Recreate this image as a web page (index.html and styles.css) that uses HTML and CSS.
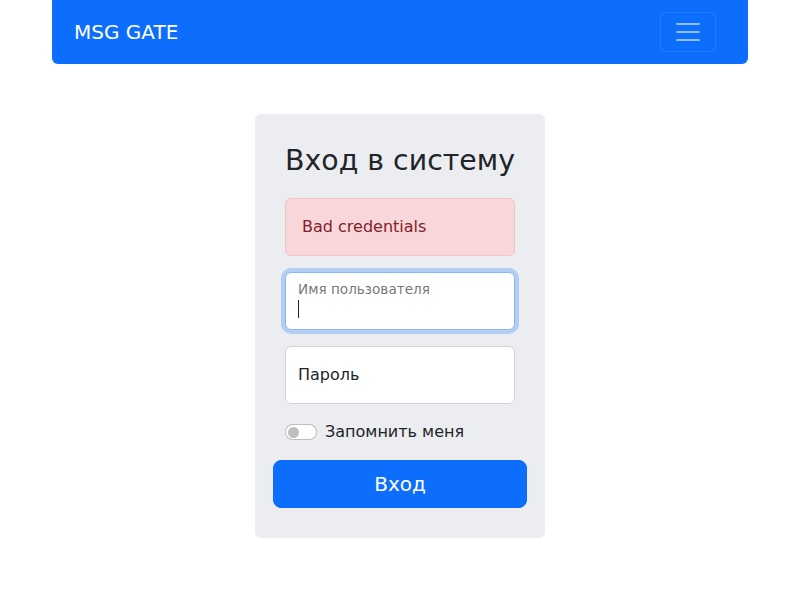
FILE: index.html
```html
<!DOCTYPE html>
<html lang="ru">
<head>
<meta charset="utf-8">
<title>MSG GATE</title>
<link rel="stylesheet" href="styles.css">
</head>
<body>
<div class="container">
  <nav class="navbar">
    <a class="brand" href="#">MSG GATE</a>
    <button class="toggler" type="button" aria-label="Меню">
      <svg width="30" height="30" viewBox="0 0 30 30"><path d="M4 7h22M4 15h22M4 23h22" stroke="rgba(255,255,255,0.55)" stroke-width="2" stroke-linecap="round"/></svg>
    </button>
  </nav>
</div>
<main class="main">
  <form class="card">
    <h1 class="title">Вход в систему</h1>
    <div class="alert">Bad credentials</div>
    <div class="field focused">
      <input class="input" type="text" id="username">
      <label class="label floated" for="username">Имя пользователя</label>
      <span class="caret"></span>
    </div>
    <div class="field">
      <input class="input" type="password" id="password">
      <label class="label" for="password">Пароль</label>
    </div>
    <div class="check">
      <span class="switch"><span class="knob"></span></span>
      <label class="check-label">Запомнить меня</label>
    </div>
    <button class="btn" type="submit">Вход</button>
  </form>
</main>
</body>
</html>
```
FILE: styles.css
```css
* { box-sizing: border-box; }
html, body { margin: 0; padding: 0; }
body {
  font-family: "DejaVu Sans", sans-serif;
  font-size: 16px;
  line-height: 1.5;
  color: #212529;
  background: #fff;
}
.container {
  width: 696px;
  margin: 0 auto;
}
.navbar {
  background: #0d6efd;
  border-radius: 0 0 6px 6px;
  height: 64px;
  display: flex;
  align-items: center;
  justify-content: space-between;
  padding: 0 32px 0 22px;
}
.brand {
  color: #fff;
  font-size: 20px;
  text-decoration: none;
  line-height: 30px;
}
.toggler {
  width: 56px;
  height: 40px;
  padding: 4px 12px;
  background: transparent;
  border: 1px solid rgba(255,255,255,0.1);
  border-radius: 6px;
  display: flex;
  align-items: center;
  justify-content: center;
}
.toggler svg { display: block; }
.main {
  display: flex;
  justify-content: center;
  padding-top: 50px;
}
.card {
  width: 290px;
  background: #ecedf0;
  border-radius: 6px;
  padding: 30px 18px;
  display: flex;
  flex-direction: column;
}
.title {
  font-size: 28.4px;
  font-weight: 400;
  line-height: 1.2;
  margin: 0 12px 20px;
  text-align: center;
  white-space: nowrap;
}
.alert {
  margin: 0 12px 16px;
  padding: 16px;
  background: #f8d7da;
  border: 1px solid #f5c2c7;
  color: #842029;
  border-radius: 6px;
}
.field {
  position: relative;
  margin: 0 12px 16px;
}
.input {
  display: block;
  width: 100%;
  height: 58px;
  border: 1px solid #ced4da;
  border-radius: 6px;
  background: #fff;
  padding: 26px 12px 10px;
  font: inherit;
  color: #212529;
  outline: none;
}
.focused .input {
  border-color: #86b7fe;
  box-shadow: 0 0 0 4px rgba(13,110,253,0.25);
}
.label {
  position: absolute;
  left: 13px;
  top: 17px;
  font-size: 16px;
  line-height: 24px;
  color: #212529;
  pointer-events: none;
}
.label.floated {
  top: 7px;
  left: 13px;
  font-size: 13.6px;
  line-height: 20px;
  color: rgba(33,37,41,0.65);
}
.caret {
  position: absolute;
  left: 13px;
  top: 28px;
  width: 1px;
  height: 18px;
  background: #212529;
}
.check {
  display: flex;
  align-items: center;
  margin: 0 12px 16px;
  height: 24px;
}
.switch {
  width: 32px;
  height: 16px;
  border: 1px solid rgba(0,0,0,0.25);
  border-radius: 8px;
  background: #fff;
  display: flex;
  align-items: center;
  padding-left: 2px;
  margin-right: 8px;
}
.knob {
  width: 11px;
  height: 11px;
  border-radius: 50%;
  background: #bfbfbf;
}
.check-label { color: #212529; }
.btn {
  height: 48px;
  width: 100%;
  border: 1px solid #0d6efd;
  background: #0d6efd;
  color: #fff;
  border-radius: 8px;
  font: inherit;
  font-size: 20px;
  line-height: 30px;
  padding: 8px 16px;
}
```
